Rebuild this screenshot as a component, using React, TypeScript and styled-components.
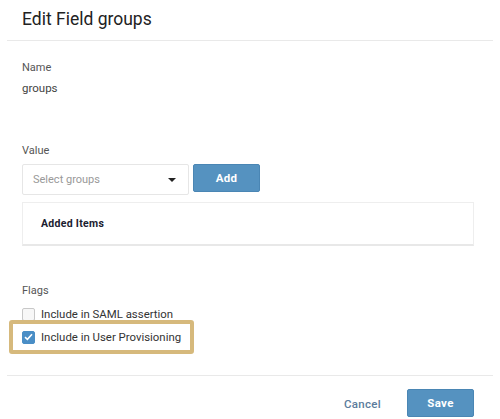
import React, { useState } from "react";
import styled, { createGlobalStyle } from "styled-components";

const GlobalStyle = createGlobalStyle`
  html, body {
    margin: 0;
    padding: 0;
    background: #ffffff;
    font-family: Roboto, "Liberation Sans", Arial, sans-serif;
  }
  * {
    box-sizing: border-box;
  }
`;

const Modal = styled.div`
  width: 500px;
  height: 419px;
  display: flex;
  flex-direction: column;
  background: #fff;
  overflow: hidden;
`;

const Header = styled.div`
  margin: 0 7px;
  height: 41px;
  padding-left: 15px;
  display: flex;
  align-items: center;
  border-bottom: 1px solid #e9e9e9;
`;

const Title = styled.h2`
  margin: 0 0 3px;
  font-size: 17.5px;
  font-weight: 400;
  color: #222;
`;

const Body = styled.div`
  flex: 1;
  padding: 20px 26px 0 22px;
  display: flex;
  flex-direction: column;
`;

const Label = styled.div`
  font-size: 11px;
  color: #555;
  line-height: 14px;
`;

const NameValue = styled.div`
  margin-top: 6px;
  font-size: 11.5px;
  color: #444;
  line-height: 14px;
`;

const Section = styled.div<{ $gap: number }>`
  margin-top: ${(p) => p.$gap}px;
`;

const InputRow = styled.div`
  margin-top: 6px;
  display: flex;
  gap: 4px;
  align-items: flex-start;
`;

const Select = styled.div`
  width: 167px;
  height: 31px;
  border: 1px solid #e6e6e6;
  border-radius: 2px;
  padding: 0 10px;
  display: flex;
  align-items: center;
  justify-content: space-between;
  font-size: 11px;
  color: #999;
`;

const Caret = styled.span`
  width: 0;
  height: 0;
  border-left: 4px solid transparent;
  border-right: 4px solid transparent;
  border-top: 4px solid #222;
  margin-right: 2px;
`;

const PrimaryButton = styled.button<{ $w: number; $h: number }>`
  width: ${(p) => p.$w}px;
  height: ${(p) => p.$h}px;
  background: #5592c0;
  border: 1px solid #4a86b4;
  border-radius: 2px;
  color: #fff;
  font-family: inherit;
  font-size: 11.5px;
  font-weight: 700;
  letter-spacing: 0.3px;
  cursor: pointer;
`;

const ItemsBox = styled.div`
  margin-top: 7px;
  width: 452px;
  height: 44px;
  border: 1px solid #eeeeee;
  border-bottom: 2px solid #e8e8e8;
  padding-left: 18px;
  display: flex;
  align-items: center;
  font-size: 10.5px;
  font-weight: 700;
  color: #1a2030;
  letter-spacing: 0.3px;
`;

const Flags = styled.div`
  margin-top: 6px;
  display: flex;
  flex-direction: column;
  align-items: flex-start;
`;

const CheckRow = styled.label<{ $highlight?: boolean }>`
  display: flex;
  align-items: center;
  gap: 6px;
  font-size: 11.4px;
  color: #333;
  height: 20px;
  cursor: pointer;
  ${(p) =>
    p.$highlight
      ? `
    margin-left: -13px;
    margin-top: -4px;
    height: 34px;
    padding: 0 9px;
    border: 4px solid #d6b97c;
    border-radius: 3px;
  `
      : ""}
`;

const Box = styled.span<{ $checked: boolean }>`
  width: 13px;
  height: 13px;
  border-radius: 2px;
  border: 1px solid ${(p) => (p.$checked ? "#4a8ec6" : "#c8c8c8")};
  background: ${(p) => (p.$checked ? "#4a8ec6" : "#f7f7f7")};
  display: flex;
  align-items: center;
  justify-content: center;
`;

const Footer = styled.div`
  margin: 0 7px;
  height: 44px;
  flex-shrink: 0;
  border-top: 1px solid #e9e9e9;
  display: flex;
  align-items: flex-start;
  justify-content: flex-end;
  padding: 13px 19px 0 0;
  gap: 26px;
`;

const TextButton = styled.button`
  background: none;
  border: none;
  font-family: inherit;
  font-size: 11.5px;
  font-weight: 500;
  color: #5b7c9c;
  letter-spacing: 0.3px;
  padding: 0;
  height: 28px;
  margin-top: 1px;
  cursor: pointer;
`;

const Checkbox = ({
  checked,
  onToggle,
  label,
  highlight,
}: {
  checked: boolean;
  onToggle: () => void;
  label: string;
  highlight?: boolean;
}) => (
  <CheckRow $highlight={highlight} onClick={onToggle}>
    <Box $checked={checked}>
      {checked && (
        <svg width="9" height="8" viewBox="0 0 9 8">
          <path d="M1 4.2 L3.4 6.4 L8 1.2" fill="none" stroke="#fff" strokeWidth="1.6" />
        </svg>
      )}
    </Box>
    {label}
  </CheckRow>
);

const App = () => {
  const [saml, setSaml] = useState(false);
  const [prov, setProv] = useState(true);

  return (
    <>
      <GlobalStyle />
      <Modal>
        <Header>
          <Title>Edit Field groups</Title>
        </Header>
        <Body>
          <Label>Name</Label>
          <NameValue>groups</NameValue>
          <Section $gap={49}>
            <Label>Value</Label>
            <InputRow>
              <Select>
                Select groups
                <Caret />
              </Select>
              <PrimaryButton $w={67} $h={28}>Add</PrimaryButton>
            </InputRow>
            <ItemsBox>Added Items</ItemsBox>
          </Section>
          <Section $gap={38}>
            <Label>Flags</Label>
            <Flags>
              <Checkbox checked={saml} onToggle={() => setSaml(!saml)} label="Include in SAML assertion" />
              <Checkbox
                checked={prov}
                onToggle={() => setProv(!prov)}
                label="Include in User Provisioning"
                highlight
              />
            </Flags>
          </Section>
        </Body>
        <Footer>
          <TextButton>Cancel</TextButton>
          <PrimaryButton $w={67} $h={28}>Save</PrimaryButton>
        </Footer>
      </Modal>
    </>
  );
};

export default App;
